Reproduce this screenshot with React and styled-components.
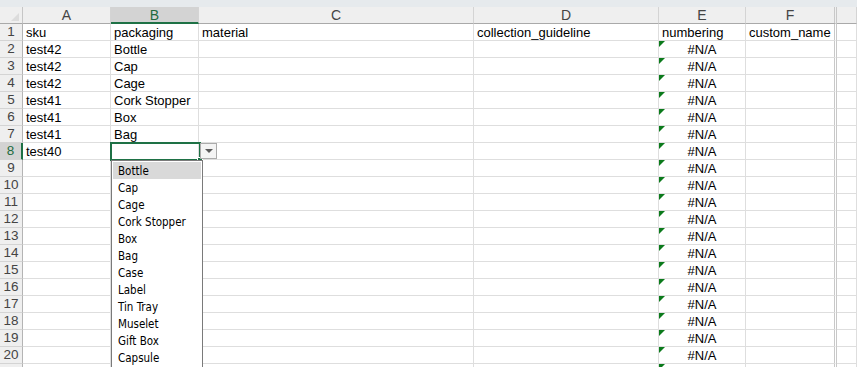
import React from "react";
import styled, { createGlobalStyle } from "styled-components";

const GlobalStyle = createGlobalStyle`
  html, body {
    margin: 0;
    padding: 0;
    background: #ffffff;
    overflow: hidden;
  }
  body {
    font-family: "Liberation Sans", Arial, sans-serif;
  }
`;

const Page = styled.div`
  width: 857px;
  height: 367px;
  overflow: hidden;
  display: flex;
  flex-direction: column;
  background: #fff;
`;

const TopBand = styled.div`
  height: 7px;
  background: #e6eaed;
  flex-shrink: 0;
`;

const Sheet = styled.div`
  position: relative;
  display: grid;
  grid-template-columns: 23px 88px 88px 275px 185px 87px 91px 1fr;
  grid-auto-rows: 17px;
`;

const Corner = styled.div`
  position: relative;
  background: #efefef;
  border-right: 1px solid #c6c6c6;
  border-bottom: 1px solid #a9a9a9;
  box-sizing: border-box;

  &::after {
    content: "";
    position: absolute;
    right: 3px;
    bottom: 2px;
    width: 0;
    height: 0;
    border-left: 8px solid transparent;
    border-bottom: 8px solid #dcdcdc;
  }
`;

const ColHead = styled.div`
  box-sizing: border-box;
  background: ${({ $active }) => ($active ? "#d3d3d3" : "#efefef")};
  color: ${({ $active }) => ($active ? "#1e6b3f" : "#444")};
  border-right: ${({ $double }) => ($double ? "3px double #c8c8c8" : "1px solid #d4d4d4")};
  border-bottom: ${({ $active }) => ($active ? "2px solid #1e7145" : "1px solid #a9a9a9")};
  font-size: 14px;
  display: flex;
  align-items: center;
  justify-content: center;
  line-height: 1;
`;

const RowHead = styled.div`
  box-sizing: border-box;
  background: ${({ $active }) => ($active ? "#d3d3d3" : "#efefef")};
  color: ${({ $active }) => ($active ? "#1e6b3f" : "#444")};
  border-right: ${({ $active }) => ($active ? "2px solid #1e7145" : "1px solid #b4b4b4")};
  border-bottom: 1px solid #d4d4d4;
  font-size: 13.5px;
  display: flex;
  align-items: center;
  justify-content: center;
  line-height: 1;
`;

const Cell = styled.div`
  position: relative;
  box-sizing: border-box;
  border-right: ${({ $double }) => ($double ? "3px double #c8c8c8" : "1px solid #dedede")};
  border-bottom: 1px solid #dedede;
  font-size: 13px;
  color: #000;
  padding: 0 3px;
  display: flex;
  align-items: center;
  justify-content: ${({ $center }) => ($center ? "center" : "flex-start")};
  white-space: nowrap;
  overflow: visible;
  line-height: 1;

  ${({ $flag }) =>
    $flag &&
    `
    &::before {
      content: "";
      position: absolute;
      left: 0;
      top: 0;
      width: 0;
      height: 0;
      border-top: 6px solid #0b7a1b;
      border-right: 6px solid transparent;
    }
  `}
`;

const Selection = styled.div`
  position: absolute;
  left: 110px;
  top: 135px;
  width: 91px;
  height: 19px;
  box-sizing: border-box;
  border: 2px solid #1e7145;
  pointer-events: none;

  &::after {
    content: "";
    position: absolute;
    right: -4px;
    bottom: -4px;
    width: 4px;
    height: 4px;
    background: #1e7145;
    border: 1px solid #fff;
  }
`;

const DropButton = styled.div`
  position: absolute;
  left: 200px;
  top: 136px;
  width: 17px;
  height: 16px;
  box-sizing: border-box;
  background: #f4f4f4;
  border: 1px solid #ababab;
  display: flex;
  align-items: center;
  justify-content: center;

  &::after {
    content: "";
    width: 0;
    height: 0;
    border-left: 4px solid transparent;
    border-right: 4px solid transparent;
    border-top: 4px solid #5a5a5a;
  }
`;

const List = styled.ul`
  position: absolute;
  left: 111px;
  top: 153px;
  width: 92px;
  margin: 0;
  padding: 1px 1px 2px;
  list-style: none;
  box-sizing: border-box;
  background: #fff;
  border: 1px solid #7a7a7a;
`;

const Option = styled.li`
  height: 17px;
  display: flex;
  align-items: center;
  padding-left: 5px;
  font-family: "DejaVu Sans Condensed", "DejaVu Sans", sans-serif;
  font-size: 11.5px;
  color: #000;
  background: ${({ $hover }) => ($hover ? "#d9d9d9" : "transparent")};
`;

const columns = ["A", "B", "C", "D", "E", "F", ""];

const data = [
  ["sku", "packaging", "material", "collection_guideline", "numbering", "custom_name"],
  ["test42", "Bottle"],
  ["test42", "Cap"],
  ["test42", "Cage"],
  ["test41", "Cork Stopper"],
  ["test41", "Box"],
  ["test41", "Bag"],
  ["test40", ""],
];

const options = [
  "Bottle",
  "Cap",
  "Cage",
  "Cork Stopper",
  "Box",
  "Bag",
  "Case",
  "Label",
  "Tin Tray",
  "Muselet",
  "Gift Box",
  "Capsule",
];

// row 21 is only a sliver at the bottom edge: gridlines and flags, no text
const LAST_FULL_ROW = 20;

const App = () => {
  const rows = Array.from({ length: 21 }, (_, i) => i + 1);
  return (
    <Page>
      <GlobalStyle />
      <TopBand />
      <Sheet>
        <Corner />
        {columns.map((c, i) => (
          <ColHead key={i} $active={c === "B"} $double={c === "F"}>
            {c}
          </ColHead>
        ))}
        {rows.map((r) => {
          const row = data[r - 1] || [];
          const visible = r <= LAST_FULL_ROW;
          return (
            <React.Fragment key={r}>
              <RowHead $active={r === 8}>{visible ? r : ""}</RowHead>
              {columns.map((c, i) => {
                let text = row[i] || "";
                const isNum = c === "E" && r > 1;
                if (isNum) text = visible ? "#N/A" : "";
                return (
                  <Cell key={i} $center={isNum} $flag={isNum} $double={c === "F"}>
                    {text}
                  </Cell>
                );
              })}
            </React.Fragment>
          );
        })}
        <Selection />
        <DropButton />
        <List>
          {options.map((o, i) => (
            <Option key={o} $hover={i === 0}>
              {o}
            </Option>
          ))}
        </List>
      </Sheet>
    </Page>
  );
};

export default App;
